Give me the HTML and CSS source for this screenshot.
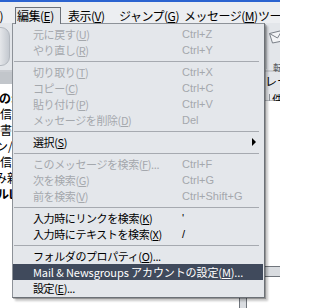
FILE: index.html
```html
<!DOCTYPE html>
<html lang="ja">
<head>
<meta charset="utf-8">
<title>編集メニュー</title>
<link rel="stylesheet" href="styles.css">
</head>
<body>
<div class="screen">
  <div class="titlebar"></div>
  <nav class="menubar">
    <div class="mb-file"><span>ファイル(<u>F</u>)</span></div>
    <div class="mb-item mb-edit active">編集(<u>E</u>)</div>
    <div class="mb-item mb-view">表示(<u>V</u>)</div>
    <div class="mb-item mb-go">ジャンプ(<u>G</u>)</div>
    <div class="mb-item mb-msg">メッセージ(<u>M</u>)</div>
    <div class="mb-item mb-tools">ツール(<u>T</u>)</div>
  </nav>
  <div class="workspace">
    <div class="toolbar">
      <div class="tb-left"><div class="bigicon"></div></div>
      <div class="tb-right">
        <div class="tb-sep"></div>
        <div class="tb-button">
          <svg class="envelope" width="20" height="16" viewBox="0 0 20 16">
            <path d="M1.5 5.5 L14 2.5 L17 12.5 L4.5 15 Z" fill="#f3f4f6" stroke="#7b8189" stroke-width="1"/>
            <path d="M1.5 5.5 L9.5 10 L14 2.5" fill="none" stroke="#7b8189" stroke-width="1"/>
          </svg>
          <span class="tb-label">転送</span>
        </div>
      </div>
    </div>
    <div class="panes">
      <div class="folderpane">
        <div class="pane-header"></div>
        <ul class="folderlist">
          <li class="bold off1">の:</li>
          <li>信</li>
          <li>書</li>
          <li class="off4">ン/</li>
          <li>信</li>
          <li class="off5">み新</li>
          <li class="bold off3">ルl</li>
        </ul>
      </div>
      <div class="mainpane">
        <div class="viewbar"><span>レー</span></div>
        <div class="colheader"><span class="col">件名</span></div>
        <div class="threadlist"></div>
        <div class="splitter"></div>
        <div class="preview"><div class="vbar"></div></div>
      </div>
    </div>
  </div>

  <div class="menu" role="menu">
    <div class="mi disabled"><span class="lbl">元に戻す(<u>U</u>)</span><span class="key">Ctrl+Z</span></div>
    <div class="mi disabled"><span class="lbl">やり直し(<u>R</u>)</span><span class="key">Ctrl+Y</span></div>
    <div class="sep"></div>
    <div class="mi disabled"><span class="lbl">切り取り(<u>T</u>)</span><span class="key">Ctrl+X</span></div>
    <div class="mi disabled"><span class="lbl">コピー(<u>C</u>)</span><span class="key">Ctrl+C</span></div>
    <div class="mi disabled"><span class="lbl">貼り付け(<u>P</u>)</span><span class="key">Ctrl+V</span></div>
    <div class="mi disabled"><span class="lbl">メッセージを削除(<u>D</u>)</span><span class="key">Del</span></div>
    <div class="sep"></div>
    <div class="mi"><span class="lbl">選択(<u>S</u>)</span><span class="key"></span><span class="arrow"></span></div>
    <div class="sep"></div>
    <div class="mi disabled"><span class="lbl">このメッセージを検索(<u>F</u>)...</span><span class="key">Ctrl+F</span></div>
    <div class="mi disabled"><span class="lbl">次を検索(<u>G</u>)</span><span class="key">Ctrl+G</span></div>
    <div class="mi disabled"><span class="lbl">前を検索(<u>V</u>)</span><span class="key">Ctrl+Shift+G</span></div>
    <div class="sep"></div>
    <div class="mi"><span class="lbl">入力時にリンクを検索(<u>K</u>)</span><span class="key">'</span></div>
    <div class="mi"><span class="lbl">入力時にテキストを検索(<u>X</u>)</span><span class="key">/</span></div>
    <div class="sep"></div>
    <div class="mi"><span class="lbl">フォルダのプロパティ(<u>O</u>)...</span><span class="key"></span></div>
    <div class="mi hl"><span class="lbl wide">Mail &amp; Newsgroups アカウントの設定(<u>M</u>)...</span></div>
    <div class="mi"><span class="lbl">設定(<u>E</u>)...</span><span class="key"></span></div>
  </div>
</div>
</body>
</html>
```

FILE: styles.css
```css
* { box-sizing: border-box; }
html, body { margin: 0; padding: 0; }
body {
  font-family: "Noto Sans CJK JP", "Noto Sans", sans-serif;
  font-size: 12px;
  color: #000;
  background: #fff;
}
u { text-decoration: underline; text-decoration-thickness: 1px; text-underline-offset: 1px; }

.screen {
  position: relative;
  width: 280px;
  height: 308px;
  overflow: hidden;
  background: #fff;
}

.titlebar { height: 2px; background: #2b63d0; }

/* menu bar */
.menubar {
  display: flex;
  align-items: flex-start;
  height: 21px;
  padding-top: 5px;
  background: #eceef1;
  white-space: nowrap;
  font-size: 12px;
  letter-spacing: -0.5px;
  line-height: 15px;
}
.mb-file {
  flex: none;
  width: 15px;
  height: 17px;
  display: flex;
  justify-content: flex-end;
  padding-right: 12px;
  padding-top: 1px;
}
.mb-item {
  flex: none;
  height: 17px;
  padding: 0 0 0 1px;
  border: 1px solid transparent;
  border-bottom: 0;
  margin-right: 5px;
  position: relative;
  z-index: 3;
}
.mb-item.active { border-color: #6b7078; background: #e4e7eb; }
.mb-edit { width: 46px; }
.mb-view { width: 46px; }
.mb-go { width: 60px; }
.mb-msg { width: 69px; }
.mb-tools { width: 60px; }

/* background application */
.workspace { height: 285px; }
.toolbar {
  display: flex;
  justify-content: space-between;
  height: 49px;
  background: #e3e6ea;
  border-bottom: 2px solid #c9ccd1;
}
.bigicon {
  width: 32px;
  height: 39px;
  margin: 4px 0 0 -22px;
  border-radius: 9px;
  background: linear-gradient(90deg, #ffffff 45%, #c4c9d0);
  border: 1px solid #b3b8bf;
}
.tb-right { display: flex; width: 14px; }
.tb-sep { flex: none; width: 1px; height: 44px; margin-top: 2px; background: #c5c9ce; margin-right: 1px; }
.tb-button {
  flex: none;
  width: 12px;
  display: flex;
  flex-direction: column;
  padding-top: 5px;
  white-space: nowrap;
}
.envelope { display: block; overflow: visible; }
.tb-label { font-size: 10px; line-height: 12px; margin-top: 18px; padding-left: 5px; color: #555a60; }

.panes {
  display: grid;
  grid-template-columns: 140px 140px;
  height: 236px;
}
.pane-header { height: 12px; background: #c2c6cb; }
.folderlist { list-style: none; margin: 0; padding: 6px 0 0; }
.folderlist li { height: 16px; line-height: 16px; white-space: nowrap; }
.folderlist .bold { font-weight: 700; }
.folderlist .off1 { margin-left: -1px; }
.folderlist .off3 { margin-left: -3px; }
.folderlist .off4 { margin-left: -4px; }
.folderlist .off5 { margin-left: -5px; }

.mainpane { display: flex; flex-direction: column; }
.viewbar {
  height: 18px;
  background: #e3e6ea;
  padding-left: 125px;
  line-height: 18px;
  white-space: nowrap;
}
.colheader {
  height: 11px;
  background: #e9ebee;
  border-bottom: 1px solid #b9bdc2;
  padding-left: 129px;
  white-space: nowrap;
}
.col { display: inline-block; border-left: 1px solid #8e9399; padding-left: 2px; font-size: 11px; line-height: 10px; height: 10px; }
.threadlist { height: 165px; background: #fff; }
.splitter {
  height: 11px;
  background: #d9dce0;
  border-top: 1px solid #70757c;
  border-bottom: 1px solid #70757c;
}
.preview { flex: 1; padding-top: 21px; background: #fff; }
.vbar {
  margin-left: 99px;
  width: 8px;
  height: 12px;
  background: #d9dce0;
  border-left: 1px solid #70757c;
  border-right: 1px solid #70757c;
}

/* dropdown menu (overlay) */
.menu {
  position: absolute;
  left: 12px;
  top: 23px;
  width: 253px;
  z-index: 2;
  background: #e4e7eb;
  border: 1px solid #8d9298;
  border-right-color: #6c7177;
  border-bottom-color: #6c7177;
  padding: 2px 1px 1px 0;
  box-shadow: 1px 1px 0 rgba(0, 0, 0, 0.25), 3px 3px 2px rgba(0, 0, 0, 0.22);
}
.mi {
  display: grid;
  grid-template-columns: 149px 1fr 12px;
  height: 16px;
  line-height: 16px;
  padding-left: 20px;
  white-space: nowrap;
}
.mi .lbl { font-size: 11px; letter-spacing: -0.4px; }
.mi.disabled { color: #a4a8ad; }
.mi .key { font-family: "Liberation Sans", Arial, sans-serif; font-size: 11px; }
.mi .wide { grid-column: 1 / -1; letter-spacing: -0.1px; }
.mi.hl { background: #404a5c; color: #fff; }
.arrow {
  align-self: center;
  width: 0;
  height: 0;
  margin-left: 1px;
  border-left: 4px solid #000;
  border-top: 4px solid transparent;
  border-bottom: 4px solid transparent;
}
.sep { height: 6px; padding-top: 3px; margin: 0 4px 0 1px; }
.sep::before { content: ""; display: block; height: 1px; background: #a6aab0; }
```
